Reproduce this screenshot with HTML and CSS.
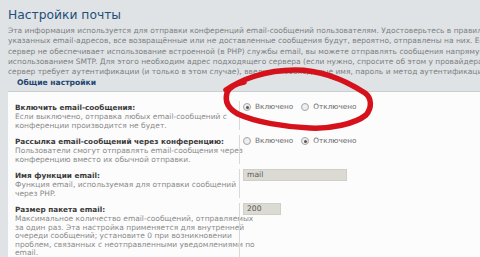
FILE: index.html
```html
<!DOCTYPE html>
<html lang="ru">
<head>
<meta charset="utf-8">
<title>Настройки почты</title>
<link rel="stylesheet" href="styles.css">
</head>
<body>
<div class="page">
  <h1 class="title">Настройки почты</h1>
  <p class="intro">Эта информация используется для отправки конференций email-сообщений пользователям. Удостоверьтесь в правильности<br>указанных email-адресов, все возвращённые или не доставленные сообщения будут, вероятно, отправлены на них. Если<br>сервер не обеспечивает использование встроенной (в PHP) службы email, вы можете отправлять сообщения напрямую через<br>использованием SMTP. Для этого необходим адрес подходящего сервера (если нужно, спросите об этом у провайдера). Если<br>сервер требует аутентификации (и только в этом случае), введите необходимые имя, пароль и метод аутентификации.</p>
  <div class="legend">Общие настройки</div>
  <div class="panel">
    <div class="row">
      <div class="dt">
        <div class="label">Включить email-сообщения:</div>
        <div class="desc">Если выключено, отправка любых email-сообщений с<br>конференции производится не будет.</div>
      </div>
      <div class="dd">
        <label class="opt"><span class="radio checked"></span>Включено</label>
        <label class="opt"><span class="radio"></span>Отключено</label>
      </div>
    </div>
    <div class="row">
      <div class="dt">
        <div class="label">Рассылка email-сообщений через конференцию:</div>
        <div class="desc">Пользователи смогут отправлять email-сообщения через<br>конференцию вместо их обычной отправки.</div>
      </div>
      <div class="dd">
        <label class="opt"><span class="radio"></span>Включено</label>
        <label class="opt"><span class="radio checked"></span>Отключено</label>
      </div>
    </div>
    <div class="row">
      <div class="dt">
        <div class="label">Имя функции email:</div>
        <div class="desc">Функция email, используемая для отправки сообщений<br>через PHP.</div>
      </div>
      <div class="dd">
        <div class="field wide">mail</div>
      </div>
    </div>
    <div class="row">
      <div class="dt">
        <div class="label">Размер пакета email:</div>
        <div class="desc">Максимальное количество email-сообщений, отправляемых<br>за один раз. Эта настройка применяется для внутренней<br>очереди сообщений; установите 0 при возникновении<br>проблем, связанных с неотправленными уведомлениями по<br>email.</div>
      </div>
      <div class="dd">
        <div class="field narrow">200</div>
      </div>
    </div>
  </div>
</div>
<svg class="scribble" width="170" height="80" viewBox="0 0 170 80">
  <path d="M6 30 C 20 20, 45 10, 75 10 C 100 10, 125 20, 145 33 C 152 38, 152 48, 146 55 C 135 64, 110 69, 90 68 C 65 67, 35 62, 18 54 C 7 48, 5 40, 7 33 C 9 27, 14 24, 24 22" fill="none" stroke="#d5121b" stroke-width="5.5" stroke-linecap="round" stroke-linejoin="round"/>
</svg>
</body>
</html>
```
FILE: styles.css
```css
html, body {
  margin: 0;
  padding: 0;
}
body {
  width: 480px;
  height: 257px;
  overflow: hidden;
  position: relative;
  background: #dfe3e5;
  font-family: "DejaVu Sans", Verdana, sans-serif;
}
.page {
  padding: 5px 0 0 8px;
}
.title {
  margin: 0;
  font-size: 12.3px;
  line-height: 20px;
  font-weight: normal;
  color: #1f4f7a;
  white-space: nowrap;
}
.intro {
  margin: 1px 0 0 0;
  font-size: 7.5px;
  line-height: 10.3px;
  color: #7c7f80;
  white-space: nowrap;
}
.legend {
  margin: 1px 0 0 9px;
  font-size: 7.6px;
  line-height: 10px;
  font-weight: bold;
  color: #1d4771;
}
.panel {
  margin-top: 3px;
  border-top: 1px solid #c9ced0;
  background: #fcfcfc;
  padding: 9px 0 0 0;
}
.row {
  display: grid;
  grid-template-columns: 231px 1fr;
  margin-bottom: 5px;
}
.dt {
  padding: 2px 0 0 7px;
}
.label {
  font-size: 7.3px;
  line-height: 10px;
  font-weight: bold;
  color: #3a3a3a;
  white-space: nowrap;
}
.desc {
  font-size: 7.5px;
  line-height: 8.5px;
  color: #8a8a8a;
  white-space: nowrap;
}
.dd {
  border-left: 1px solid #d9d9d9;
  padding: 2px 0 0 3px;
  display: flex;
  align-items: flex-start;
  gap: 8px;
}
.opt {
  display: flex;
  align-items: center;
  gap: 4px;
  font-size: 7.3px;
  line-height: 8px;
  color: #6a6a6a;
}
.radio {
  width: 6px;
  height: 6px;
  border: 1px solid #a4a4a4;
  border-radius: 50%;
  background: #eeeeee;
  position: relative;
}
.radio.checked::after {
  content: "";
  position: absolute;
  left: 1.5px;
  top: 1.5px;
  width: 3px;
  height: 3px;
  border-radius: 50%;
  background: #555;
}
.field {
  margin-top: -2px;
  height: 10px;
  border: 1px solid #cfcec7;
  background: #dcdbd3;
  font-size: 7.6px;
  line-height: 10px;
  color: #555;
  padding: 0 3px;
}
.field.wide {
  width: 96px;
}
.field.narrow {
  width: 30px;
}
.scribble {
  position: absolute;
  left: 220px;
  top: 60px;
}
```
